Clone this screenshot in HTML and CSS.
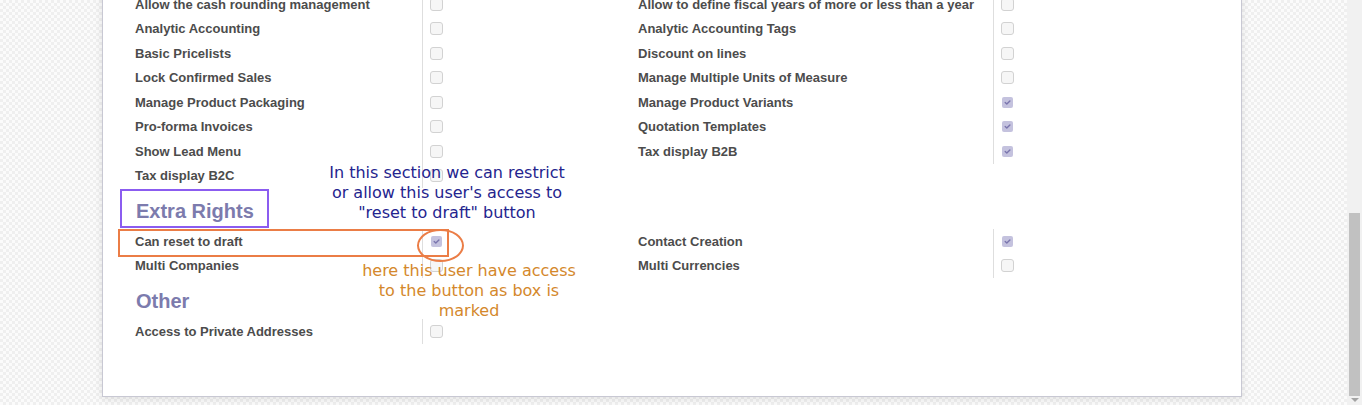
FILE: index.html
```html
<!DOCTYPE html>
<html>
<head>
<meta charset="utf-8">
<link rel="stylesheet" href="styles.css">
</head>
<body>
<div class="app">
  <div class="viewport">
    <div class="sheet">
      <div class="cols">
        <div class="col col-left">
          <div class="row"><div class="lbl">Allow the cash rounding management</div><div class="fld"><span class="cb"></span></div></div>
          <div class="row"><div class="lbl">Analytic Accounting</div><div class="fld"><span class="cb"></span></div></div>
          <div class="row"><div class="lbl">Basic Pricelists</div><div class="fld"><span class="cb"></span></div></div>
          <div class="row"><div class="lbl">Lock Confirmed Sales</div><div class="fld"><span class="cb"></span></div></div>
          <div class="row"><div class="lbl">Manage Product Packaging</div><div class="fld"><span class="cb"></span></div></div>
          <div class="row"><div class="lbl">Pro-forma Invoices</div><div class="fld"><span class="cb"></span></div></div>
          <div class="row"><div class="lbl">Show Lead Menu</div><div class="fld"><span class="cb"></span></div></div>
          <div class="row"><div class="lbl">Tax display B2C</div><div class="fld"><span class="cb"></span></div></div>
        </div>
        <div class="col col-right">
          <div class="row"><div class="lbl">Allow to define fiscal years of more or less than a year</div><div class="fld"><span class="cb"></span></div></div>
          <div class="row"><div class="lbl">Analytic Accounting Tags</div><div class="fld"><span class="cb"></span></div></div>
          <div class="row"><div class="lbl">Discount on lines</div><div class="fld"><span class="cb"></span></div></div>
          <div class="row"><div class="lbl">Manage Multiple Units of Measure</div><div class="fld"><span class="cb"></span></div></div>
          <div class="row"><div class="lbl">Manage Product Variants</div><div class="fld"><span class="cb checked"><svg viewBox="0 0 11 11"><path d="M3.2 5.6 L4.8 7.1 L7.9 3.9"/></svg></span></div></div>
          <div class="row"><div class="lbl">Quotation Templates</div><div class="fld"><span class="cb checked"><svg viewBox="0 0 11 11"><path d="M3.2 5.6 L4.8 7.1 L7.9 3.9"/></svg></span></div></div>
          <div class="row"><div class="lbl">Tax display B2B</div><div class="fld"><span class="cb checked"><svg viewBox="0 0 11 11"><path d="M3.2 5.6 L4.8 7.1 L7.9 3.9"/></svg></span></div></div>
        </div>
      </div>

      <h2 class="heading">Extra Rights</h2>
      <div class="cols">
        <div class="col col-left">
          <div class="row"><div class="lbl">Can reset to draft</div><div class="fld"><span class="cb checked"><svg viewBox="0 0 11 11"><path d="M3.2 5.6 L4.8 7.1 L7.9 3.9"/></svg></span></div></div>
          <div class="row"><div class="lbl">Multi Companies</div><div class="fld"><span class="cb"></span></div></div>
        </div>
        <div class="col col-right">
          <div class="row"><div class="lbl">Contact Creation</div><div class="fld"><span class="cb checked"><svg viewBox="0 0 11 11"><path d="M3.2 5.6 L4.8 7.1 L7.9 3.9"/></svg></span></div></div>
          <div class="row"><div class="lbl">Multi Currencies</div><div class="fld"><span class="cb"></span></div></div>
        </div>
      </div>

      <h2 class="heading">Other</h2>
      <div class="cols">
        <div class="col col-left">
          <div class="row"><div class="lbl">Access to Private Addresses</div><div class="fld"><span class="cb"></span></div></div>
        </div>
      </div>
    </div>

    <div class="note note-blue">In this section we can restrict<br>or allow this user's access to<br>"reset to draft" button</div>
    <div class="note note-orange">here this user have access<br>to the button as box is<br>marked</div>
    <div class="mark mark-purple"></div>
    <div class="mark mark-orange"></div>
    <div class="mark mark-ellipse"></div>
  </div>
  <div class="scrollbar">
    <div class="track"><div class="thumb"></div></div>
    <div class="arrow"></div>
  </div>
</div>
</body>
</html>
```

FILE: styles.css
```css
html, body {
  margin: 0;
  padding: 0;
  height: 405px;
  overflow: hidden;
}

body {
  font-family: "Liberation Sans", Arial, sans-serif;
}

.app {
  display: flex;
  width: 1362px;
  height: 405px;
}

.viewport {
  position: relative;
  flex: 1;
  height: 405px;
  overflow: hidden;
  background-color: #f7f7f7;
  background-image: repeating-conic-gradient(#efefef 0 25%, #fbfbfb 0 50%);
  background-size: 6px 6px;
}

.sheet {
  box-sizing: border-box;
  width: 1140px;
  margin: -20px 0 0 102px;
  padding: 11px 0 52px 32px;
  background: #fff;
  border: 1px solid #c8c8d3;
  box-shadow: 0 2px 8px rgba(0, 0, 0, 0.10);
}

.cols {
  display: flex;
}

.col-left {
  width: 503px;
}

.col-right {
  flex: 1;
}

.row {
  display: grid;
  height: 24.5px;
}

.col-left .row {
  grid-template-columns: 287px 1fr;
}

.col-right .row {
  grid-template-columns: 355px 1fr;
}

.lbl {
  display: flex;
  align-items: center;
  font-size: 13px;
  font-weight: bold;
  color: #4c4c4c;
  white-space: nowrap;
}

.fld {
  display: flex;
  align-items: center;
  border-left: 1px solid #dedede;
  padding-left: 7px;
}

.cb {
  box-sizing: border-box;
  display: inline-flex;
  align-items: center;
  justify-content: center;
  width: 13px;
  height: 13px;
  border: 1px solid #d2d2d2;
  border-radius: 3px;
  background: #f6f6f6;
}

.cb.checked {
  width: 11px;
  height: 11px;
  margin-left: 1px;
  border: none;
  border-radius: 2px;
  background: #c4c2de;
}

.cb svg {
  width: 11px;
  height: 11px;
}

.cb svg path {
  fill: none;
  stroke: #7b76ae;
  stroke-width: 1.4;
  stroke-linecap: round;
  stroke-linejoin: round;
}

.heading {
  margin: 11px 0 6px 1px;
  font-size: 20px;
  line-height: 24px;
  font-weight: bold;
  color: #7c7bad;
}

/* annotations drawn over the screenshot */
.note {
  position: absolute;
  width: 320px;
  font-family: "DejaVu Sans", Verdana, sans-serif;
  font-size: 16px;
  line-height: 20px;
  text-align: center;
  white-space: nowrap;
}

.note-blue {
  left: 287px;
  top: 163px;
  color: #24248e;
}

.note-orange {
  left: 309px;
  top: 261px;
  color: #d4882c;
}

.mark {
  position: absolute;
  box-sizing: border-box;
}

.mark-purple {
  left: 120px;
  top: 189px;
  width: 149px;
  height: 39px;
  border: 2px solid #8b5cf0;
}

.mark-orange {
  left: 118px;
  top: 229px;
  width: 331px;
  height: 28px;
  border: 2px solid #eb7d46;
}

.mark-ellipse {
  left: 417px;
  top: 229px;
  width: 47px;
  height: 33px;
  border: 2px solid #eb7d46;
  border-radius: 50%;
}

.scrollbar {
  width: 15px;
  height: 405px;
  background: #f1f1f1;
  display: flex;
  flex-direction: column;
}

.track {
  flex: 1;
  padding: 213px 2px 0 2px;
}

.thumb {
  height: 183px;
  background: #c1c1c1;
}

.arrow {
  width: 0;
  height: 0;
  margin: 1px auto 3px;
  border-left: 4px solid transparent;
  border-right: 4px solid transparent;
  border-top: 4px solid #a3a3a3;
}
```
